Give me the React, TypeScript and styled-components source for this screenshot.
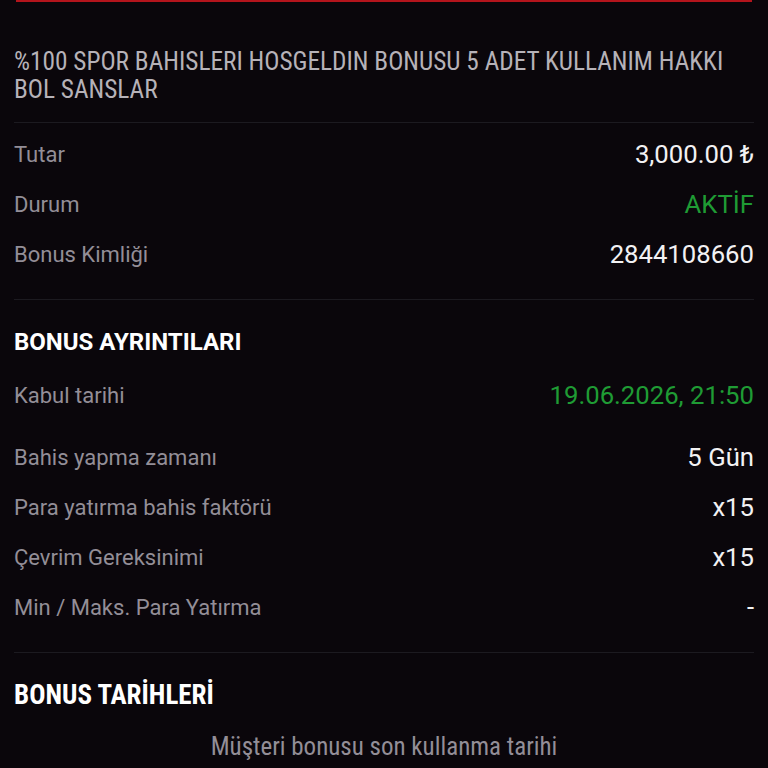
import React from "react";
import styled, { createGlobalStyle } from "styled-components";

const Global = createGlobalStyle`
  html, body { margin: 0; padding: 0; background: #0a060b; }
  body { font-family: Roboto, "Liberation Sans", sans-serif; }
`;

const Page = styled.div`
  width: 768px;
  height: 768px;
  overflow: hidden;
  background: #0a060b;
  box-sizing: border-box;
  padding: 0 14px 0 14px;
`;

const TopBar = styled.div`
  height: 2px;
  margin: 0 2px 0 2px;
  background: #b3141c;
`;

const Title = styled.div`
  font-family: "Roboto Condensed", Roboto, sans-serif;
  font-size: 25.3px;
  line-height: 28px;
  color: #b6b2b8;
  padding: 46px 0 18px 0;
`;

const Divider = styled.div`
  height: 1px;
  background: #1c1a20;
`;

const Section = styled.div<{ $pad?: string }>`
  padding: ${(p) => p.$pad ?? "0"};
`;

const Row = styled.div<{ $mt?: number; $mb?: number }>`
  display: flex;
  align-items: center;
  justify-content: space-between;
  height: 50px;
  margin: ${(p) => p.$mt ?? 0}px 0 ${(p) => p.$mb ?? 0}px;
`;

const Label = styled.span`
  font-size: 22px;
  color: #938e97;
`;

const Value = styled.span<{ $green?: boolean }>`
  font-size: 25.7px;
  color: ${(p) => (p.$green ? "#1f9b34" : "#f2f1f3")};
`;

const Heading = styled.div`
  font-size: 24px;
  font-weight: 700;
  color: #ffffff;
  height: 30px;
  display: flex;
  align-items: center;
`;

const CondHeading = styled(Heading)`
  font-family: "Roboto Condensed", Roboto, sans-serif;
  font-size: 27px;
`;

const Centered = styled.div`
  text-align: center;
  font-family: "Roboto Condensed", Roboto, sans-serif;
  font-size: 25px;
  line-height: 30px;
  color: #938e97;
  margin-top: 22px;
`;

export default function App() {
  return (
    <>
      <Global />
      <Page>
        <TopBar />
        <Title>
          %100 SPOR BAHISLERI HOSGELDIN BONUSU 5 ADET KULLANIM HAKKI BOL SANSLAR
        </Title>
        <Divider />
        <Section $pad="6px 0 20px">
          <Row><Label>Tutar</Label><Value>3,000.00 ₺</Value></Row>
          <Row><Label>Durum</Label><Value $green>AKTİF</Value></Row>
          <Row><Label>Bonus Kimliği</Label><Value>2844108660</Value></Row>
        </Section>
        <Divider />
        <Section $pad="27px 0 20px">
          <Heading>BONUS AYRINTILARI</Heading>
          <Row $mt={13} $mb={12}><Label>Kabul tarihi</Label><Value $green>19.06.2026, 21:50</Value></Row>
          <Row><Label>Bahis yapma zamanı</Label><Value>5 Gün</Value></Row>
          <Row><Label>Para yatırma bahis faktörü</Label><Value>x15</Value></Row>
          <Row><Label>Çevrim Gereksinimi</Label><Value>x15</Value></Row>
          <Row><Label>Min / Maks. Para Yatırma</Label><Value>-</Value></Row>
        </Section>
        <Divider />
        <Section $pad="27px 0 0">
          <CondHeading>BONUS TARİHLERİ</CondHeading>
          <Centered>Müşteri bonusu son kullanma tarihi</Centered>
        </Section>
      </Page>
    </>
  );
}
